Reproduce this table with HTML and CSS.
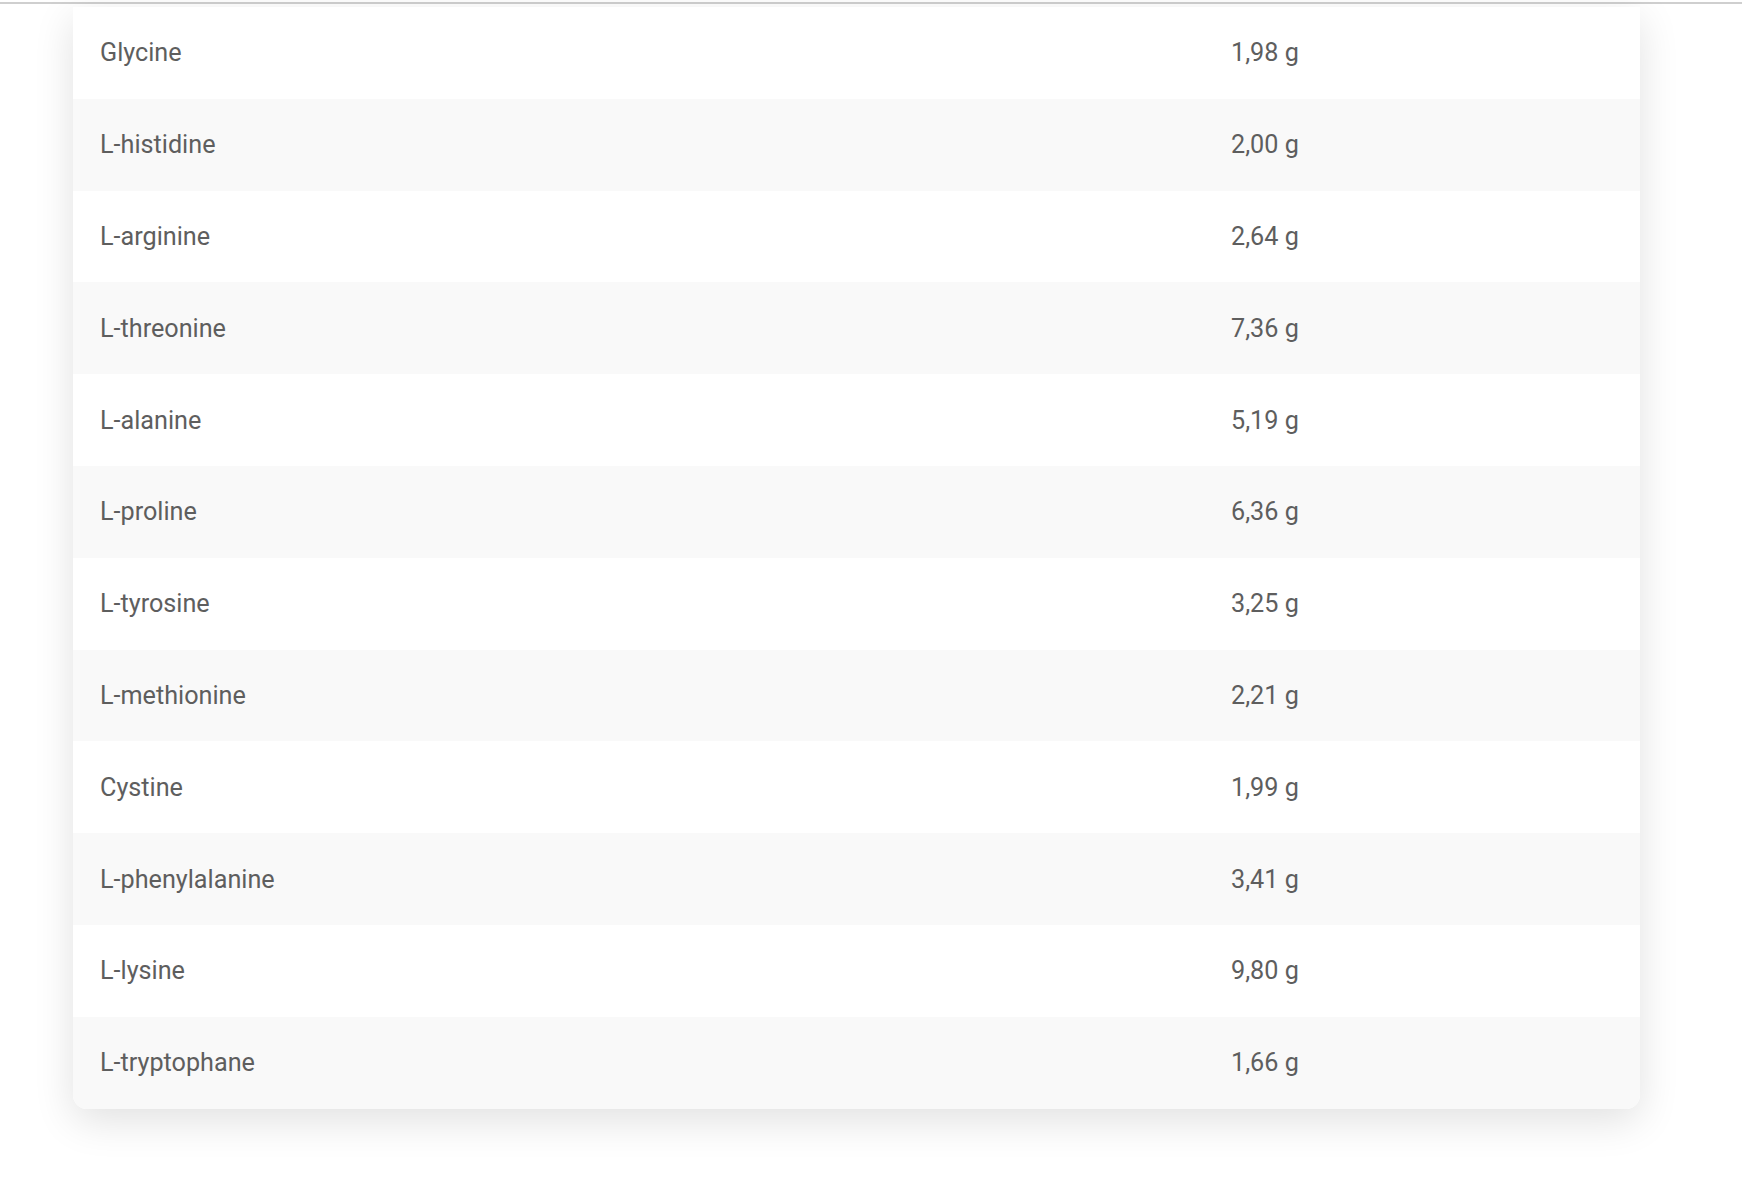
FILE: index.html
```html
<!DOCTYPE html>
<html lang="fr">
<head>
<meta charset="utf-8">
<title>Acides aminés</title>
<link rel="stylesheet" href="styles.css">
</head>
<body>
<div class="topline"></div>
<div class="page">
  <div class="card">
    <div class="row"><div class="name">Glycine</div><div class="val">1,98 g</div></div>
    <div class="row"><div class="name">L-histidine</div><div class="val">2,00 g</div></div>
    <div class="row"><div class="name">L-arginine</div><div class="val">2,64 g</div></div>
    <div class="row"><div class="name">L-threonine</div><div class="val">7,36 g</div></div>
    <div class="row"><div class="name">L-alanine</div><div class="val">5,19 g</div></div>
    <div class="row"><div class="name">L-proline</div><div class="val">6,36 g</div></div>
    <div class="row"><div class="name">L-tyrosine</div><div class="val">3,25 g</div></div>
    <div class="row"><div class="name">L-methionine</div><div class="val">2,21 g</div></div>
    <div class="row"><div class="name">Cystine</div><div class="val">1,99 g</div></div>
    <div class="row"><div class="name">L-phenylalanine</div><div class="val">3,41 g</div></div>
    <div class="row"><div class="name">L-lysine</div><div class="val">9,80 g</div></div>
    <div class="row"><div class="name">L-tryptophane</div><div class="val">1,66 g</div></div>
  </div>
</div>
</body>
</html>
```
FILE: styles.css
```css
html, body {
  margin: 0;
  padding: 0;
  background: #ffffff;
}
body {
  font-family: Roboto, "Liberation Sans", sans-serif;
  color: #5e5e5e;
  min-height: 1198px;
}
.topline {
  margin-top: 2px;
  height: 2px;
  background: #cfcfcf;
}
.page {
  padding: 3px 102px 90px 73px;
}
.card {
  background: #ffffff;
  border-radius: 0 0 14px 14px;
  box-shadow: 0 12px 40px rgba(0, 0, 0, 0.12);
  overflow: hidden;
}
.row {
  display: grid;
  grid-template-columns: 1158px 1fr;
  height: 91.8px;
  align-items: center;
  font-size: 25.2px;
}
.row:nth-child(even) {
  background: #f9f9f9;
}
.name {
  padding-left: 27px;
}
.val {
  padding-left: 0;
}
```
